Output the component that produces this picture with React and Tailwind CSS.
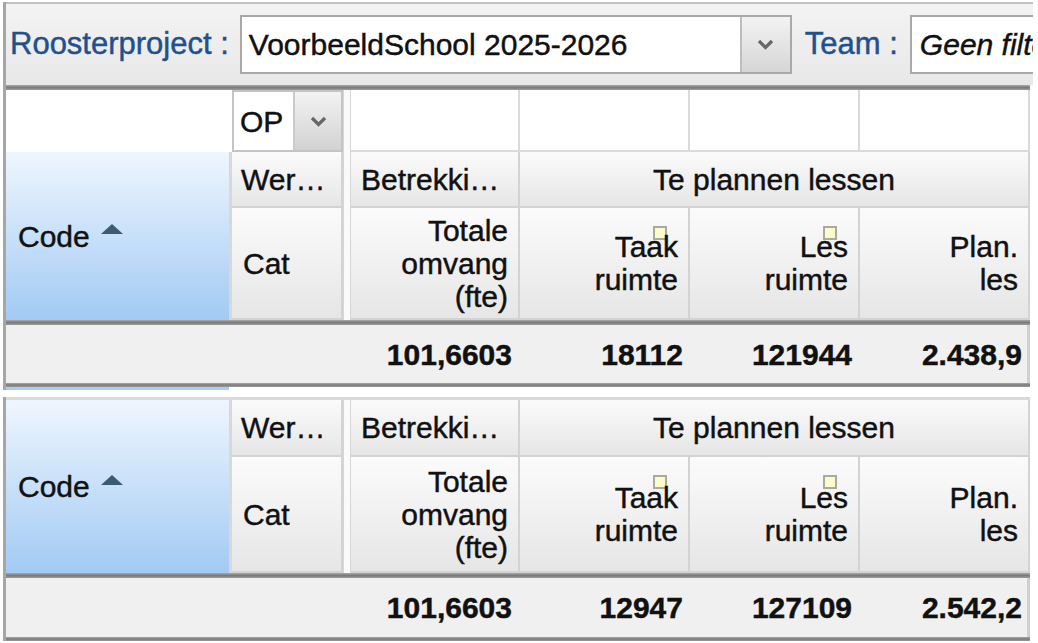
import React from 'react';

const hdr = 'bg-gradient-to-b from-[#fbfbfb] to-[#e6e6e6] border-r-2 border-b-2 border-[#d3d3d3]';

const Chevron = () => (
  <svg width="17" height="11" viewBox="0 0 17 11">
    <path d="M2 2 L8.5 8.5 L15 2" fill="none" stroke="#666666" strokeWidth="3.2" />
  </svg>
);

const Sep = () => <div className="w-[8px] bg-[#fafafa] border-x border-[#d6d6d6]" />;

const Note = () => (
  <div className="absolute top-[18px] right-[21px] w-[14px] h-[14px] bg-[#fbfbcb] border-2 border-[#aaa99c]" />
);

const HeadCell = ({ w, lines, note }) => (
  <div className={`${w} ${hdr} relative flex flex-col justify-center items-end pr-[10px] leading-[33px]`}>
    {note && <Note />}
    {lines.map((l) => (
      <span key={l} className="relative">{l}</span>
    ))}
  </div>
);

const DarkLine = ({ h }) => (
  <div className={`${h} w-[1024px] bg-gradient-to-b from-[#a9a9a9] via-[#7b7b7b] to-[#9c9c9c]`} />
);

const Headers = ({ r1, r2 }) => (
  <div className="flex">
    <div className="w-[226px] border-r-[3px] border-[#d8d8d8] bg-gradient-to-b from-[#eef6fe] to-[#a2caf3] flex items-center pl-[12px]">
      <span>Code</span>
      <svg className="ml-[11px] -mt-[14px]" width="22" height="10" viewBox="0 0 22 10">
        <path d="M11 0 L22 10 L0 10 Z" fill="#3c5a72" />
      </svg>
    </div>
    <div className="w-[111px] flex flex-col">
      <div className={`${r1} ${hdr} flex items-center pl-[9px]`}>Wer…</div>
      <div className={`${r2} ${hdr} flex items-center pl-[11px]`}>Cat</div>
    </div>
    <Sep />
    <div className="w-[679px] flex flex-col">
      <div className={`${r1} flex`}>
        <div className={`w-[169px] ${hdr} flex items-center pl-[10px]`}>Betrekki…</div>
        <div className={`flex-1 ${hdr} flex items-center justify-center`}>Te plannen lessen</div>
      </div>
      <div className={`${r2} flex`}>
        <HeadCell w="w-[169px]" lines={['Totale', 'omvang', '(fte)']} />
        <HeadCell w="w-[170px]" lines={['Taak', 'ruimte']} note />
        <HeadCell w="w-[170px]" lines={['Les', 'ruimte']} note />
        <HeadCell w="w-[170px]" lines={['Plan.', 'les']} />
      </div>
    </div>
  </div>
);

const Totals = ({ h, values }) => (
  <div className={`${h} w-[1024px] flex bg-[#f0f0f0] border-r-[3px] border-[#d0d0d0] font-bold`}>
    <div className="w-[345px]" />
    <div className="w-[169px] flex items-center justify-end pr-[8px]">{values[0]}</div>
    <div className="w-[170px] flex items-center justify-end pr-[7px]">{values[1]}</div>
    <div className="w-[170px] flex items-center justify-end pr-[8px]">{values[2]}</div>
    <div className="flex-1 flex items-center justify-end pr-[5px]">{values[3]}</div>
  </div>
);

export default function App() {
  return (
    <div className="w-[1038px] h-[643px] overflow-hidden bg-white text-[30px] text-[#111] font-['Liberation_Sans',Arial,sans-serif] [-webkit-text-stroke:0.45px] pl-[3px] pt-[2px]">
      {/* first view */}
      <div className="border-l-[3px] border-[#a6a6a6]">
        <div className="w-[1027px] h-[83px] border-t-2 border-[#c2c2c2] bg-gradient-to-b from-[#f3f3f3] to-[#e8e8e8] flex items-center pl-[4px] overflow-hidden">
          <span className="text-[31px] text-[#22508c] whitespace-nowrap">Roosterproject :</span>
          <div className="ml-[11px] w-[552px] h-[59px] shrink-0 border-2 border-[#a9a9a9] bg-white flex">
            <div className="flex-1 flex items-center pl-[7px] whitespace-nowrap">VoorbeeldSchool 2025-2026</div>
            <div className="w-[50px] border-l-2 border-[#bdbdbd] bg-gradient-to-b from-[#f3f3f3] to-[#d6d6d6] flex items-center justify-center">
              <Chevron />
            </div>
          </div>
          <span className="ml-[13px] text-[31px] text-[#22508c] whitespace-nowrap">Team :</span>
          <div className="ml-[12px] w-[200px] h-[59px] shrink-0 border-2 border-[#a9a9a9] bg-white flex items-center pl-[8px] italic whitespace-nowrap">
            Geen filter
          </div>
        </div>
        <DarkLine h="h-[5px]" />
        <div className="flex h-[62px]">
          <div className="w-[226px] bg-white" />
          <div className="w-[111px] border-2 border-[#c4c4c4] flex bg-white">
            <div className="flex-1 flex items-center pl-[6px]">OP</div>
            <div className="w-[48px] border-l-2 border-[#cbcbcb] bg-gradient-to-b from-[#f3f3f3] to-[#d2d2d2] flex items-center justify-center">
              <Chevron />
            </div>
          </div>
          <Sep />
          <div className="w-[169px] bg-white border-r-2 border-b-2 border-[#dadada]" />
          <div className="w-[170px] bg-white border-r-2 border-b-2 border-[#dadada]" />
          <div className="w-[170px] bg-white border-r-2 border-b-2 border-[#dadada]" />
          <div className="w-[170px] bg-white border-r-2 border-b-2 border-[#dadada]" />
        </div>
        <Headers r1="h-[56px]" r2="h-[112px]" />
        <DarkLine h="h-[5px]" />
        <Totals h="h-[58px]" values={['101,6603', '18112', '121944', '2.438,9']} />
        <DarkLine h="h-[4px]" />
        <div className="w-[223px] h-[3px] bg-[#a8cdf3]" />
      </div>

      <div className="h-[7px]" />

      {/* second view */}
      <div className="border-l-[3px] border-[#a6a6a6]">
        <div className="w-[1024px] h-[3px] bg-[#d9d9d9]" />
        <Headers r1="h-[57px]" r2="h-[116px]" />
        <DarkLine h="h-[5px]" />
        <Totals h="h-[59px]" values={['101,6603', '12947', '127109', '2.542,2']} />
        <DarkLine h="h-[4px]" />
      </div>
    </div>
  );
}
